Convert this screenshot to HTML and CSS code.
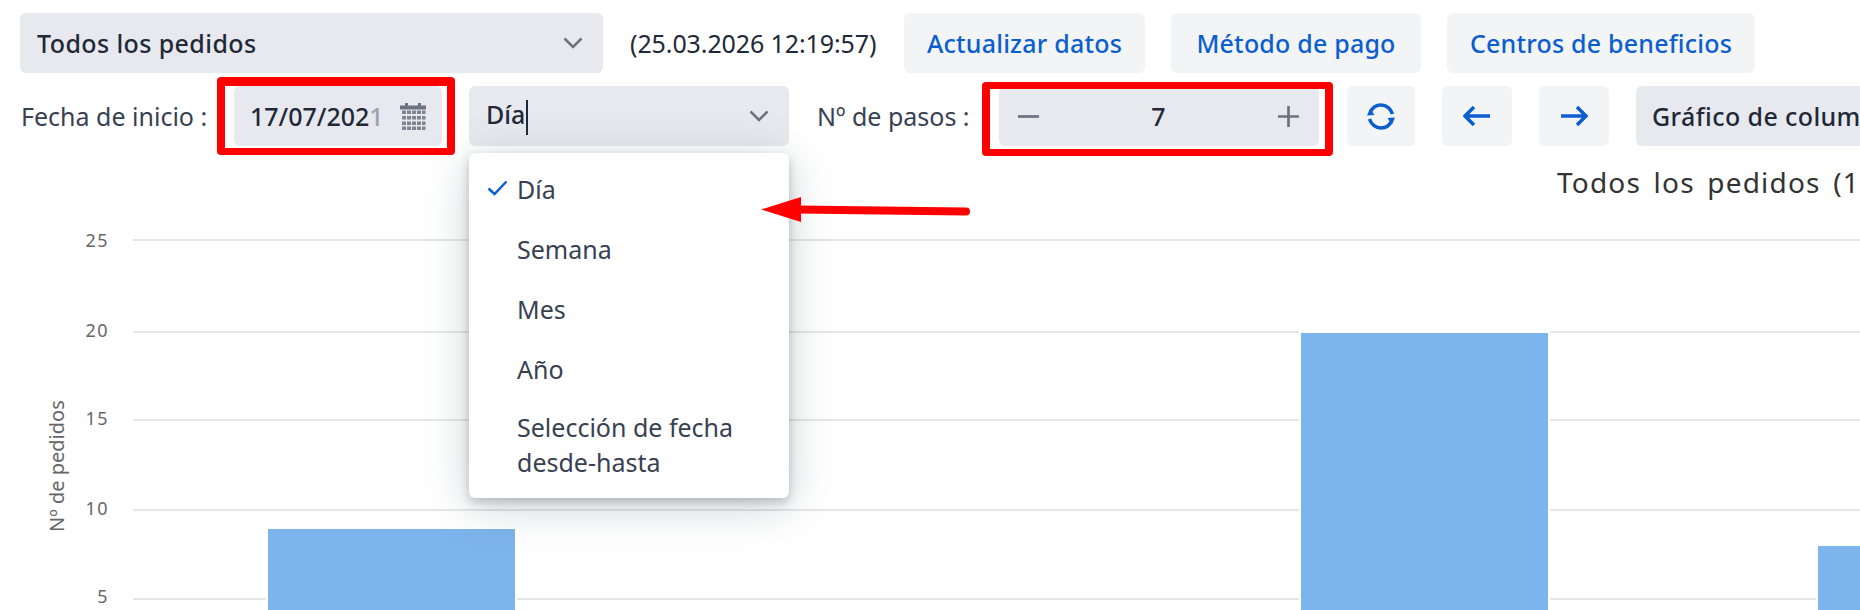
FILE: index.html
```html
<!DOCTYPE html>
<html lang="es">
<head>
    <meta charset="UTF-8">
    <title>Pedidos</title>
    <link rel="stylesheet" href="styles.css">
</head>
<body>
    <div class="toolbar">
        <div class="row row-top">
            <div class="select select-orders">
                <span>Todos los pedidos</span>
                <svg class="chevron" viewBox="0 0 20 12"><path d="M1.5 1.5 10 10l8.5-8.5"/></svg>
            </div>
            <span class="timestamp">(25.03.2026 12:19:57)</span>
            <button class="btn btn-update">Actualizar datos</button>
            <button class="btn btn-payment">Método de pago</button>
            <button class="btn btn-centers">Centros de beneficios</button>
        </div>

        <div class="row row-bottom">
            <label class="label label-date">Fecha de inicio :</label>
            <div class="date-input marked">
                <span class="date-text">17/07/202<span class="date-fade">1</span></span>
                <svg class="calendar" viewBox="0 0 26 27">
                    <path d="M0 2.5h5V0h3v2.5h10V0h3v2.5h5V6.5H0z"/>
                    <path d="M2 7.5h4V11H2zM7 7.5h4V11H7zM12 7.5h4V11h-4zM17 7.5h4V11h-4zM22 7.5h3.5V11H22zM2 13h4v3.5H2zM7 13h4v3.5H7zM12 13h4v3.5h-4zM17 13h4v3.5h-4zM22 13h3.5v3.5H22zM2 18.5h4V22H2zM7 18.5h4V22H7zM12 18.5h4V22h-4zM17 18.5h4V22h-4zM22 18.5h3.5V22H22zM2 23.5h4V27H2zM7 23.5h4V27H7zM12 23.5h4V27h-4zM17 23.5h4V27h-4zM22 23.5h3.5V27H22z" opacity=".85"/>
                </svg>
                <div class="red-box red-box-date"></div>
            </div>

            <div class="select select-period">
                <span>Día<span class="caret"></span></span>
                <svg class="chevron" viewBox="0 0 20 12"><path d="M1.5 1.5 10 10l8.5-8.5"/></svg>
                <ul class="menu">
                    <li class="menu-item">
                        <svg class="check" viewBox="0 0 21 16"><path d="M1.5 8.5 7.5 14l12-12.5"/></svg>
                        Día
                    </li>
                    <li class="menu-item">Semana</li>
                    <li class="menu-item">Mes</li>
                    <li class="menu-item">Año</li>
                    <li class="menu-item menu-item-long">Selección de fecha desde-hasta</li>
                </ul>
            </div>

            <label class="label label-steps">Nº de pasos :</label>
            <div class="stepper marked">
                <svg class="step-icon" viewBox="0 0 24 24"><path d="M1 12h22"/></svg>
                <span class="step-value">7</span>
                <svg class="step-icon" viewBox="0 0 24 24"><path d="M1 12h22M12 1v22"/></svg>
                <div class="red-box red-box-steps"></div>
            </div>

            <button class="btn btn-icon btn-refresh">
                <svg viewBox="0 0 28 27" class="blue-icon">
                    <path d="M3.5 9C5.5 4.5 9.5 2 14 2c5.5 0 10 4 11.5 9"/>
                    <path d="M24.5 18c-2 4.5-6 7-10.5 7-5.5 0-10-4-11.5-9"/>
                    <path class="fill" d="M0 12.5 7.5 12 3 5.5zM28 14.5 20.5 15l4.5 6.5z"/>
                </svg>
            </button>
            <button class="btn btn-icon btn-arrow">
                <svg viewBox="0 0 28 22" class="blue-icon"><path d="M27 11H2M11 2l-9 9 9 9"/></svg>
            </button>
            <button class="btn btn-icon btn-arrow">
                <svg viewBox="0 0 28 22" class="blue-icon"><path d="M1 11h25M17 2l9 9-9 9"/></svg>
            </button>
            <div class="select select-chart">
                <span>Gráfico de colum</span>
            </div>
        </div>
    </div>

    <!-- Chart -->
    <svg class="chart" viewBox="0 146 1860 464">
        <text class="chart-title" x="1557" y="193">Todos los pedidos (1</text>

        <g class="grid">
            <path d="M133 240H1860M133 332H1860M133 420H1860M133 510H1860M133 599H1860"/>
        </g>

        <g class="axis-labels">
            <text x="109" y="247">25</text>
            <text x="109" y="337">20</text>
            <text x="109" y="425">15</text>
            <text x="109" y="515">10</text>
            <text x="109" y="603">5</text>
        </g>
        <text class="axis-title" transform="translate(64 532) rotate(-90)">Nº de pedidos</text>

        <g class="bars">
            <rect x="267" y="528" width="249" height="90"/>
            <rect x="1300" y="332" width="249" height="286"/>
            <rect x="1817" y="545" width="60" height="70"/>
        </g>
    </svg>

    <!-- Red arrow drawn over the screenshot -->
    <svg class="annotation-arrow" viewBox="0 0 210 26">
        <path class="arrow-head" d="M0 12.5 40 0v25z"/>
        <path class="arrow-tail" d="M36 12.5 205 14.5"/>
    </svg>
</body>
</html>
```

FILE: styles.css
```css
* {
    margin: 0;
    padding: 0;
    box-sizing: border-box;
}
html, body {
    width: 1860px;
    height: 610px;
    overflow: hidden;
}
body {
    position: relative;
    font-family: "Noto Sans", sans-serif;
    font-size: 25px;
    color: #374151;
    background-color: #fff;
}
.toolbar {
    padding: 13px 0 0 20px;
}
.row {
    display: flex;
    align-items: center;
    height: 60px;
    white-space: nowrap;
}
.row-bottom {
    margin-top: 13px;
}
.select {
    position: relative;
    display: flex;
    align-items: center;
    justify-content: space-between;
    flex-shrink: 0;
    height: 60px;
    background-color: #e7e9ee;
    border-radius: 6px;
    color: #1f2937;
    font-weight: 500;
}
.select-orders {
    width: 583px;
    padding: 0 20px 0 17px;
    letter-spacing: 0.4px;
}
.select-period {
    width: 320px;
    margin-left: 27px;
    padding: 0 20px 0 17px;
}
.select-chart {
    width: 300px;
    margin-left: 27px;
    padding-left: 16px;
    letter-spacing: 0.4px;
}
.chevron {
    width: 20px;
    height: 12px;
    fill: none;
    stroke: #6b7280;
    stroke-width: 2.5;
}
.caret {
    display: inline-block;
    width: 2px;
    height: 35px;
    margin-left: 1px;
    vertical-align: middle;
    background-color: #1f2937;
}
.timestamp {
    width: 247px;
    margin-left: 27px;
    color: #1f2937;
    letter-spacing: -0.1px;
}
.btn {
    height: 60px;
    border: none;
    border-radius: 6px;
    background-color: #f3f4f6;
    color: #0b5ecf;
    font-family: inherit;
    font-size: 25px;
    font-weight: 500;
    letter-spacing: 0.2px;
    flex-shrink: 0;
}
.btn-update {
    width: 241px;
    margin-left: 27px;
}
.btn-payment {
    width: 250px;
    margin-left: 26px;
}
.btn-centers {
    width: 308px;
    margin-left: 26px;
}
.btn-icon {
    display: flex;
    align-items: center;
    justify-content: center;
}
.btn-refresh {
    width: 68px;
    margin-left: 28px;
}
.btn-refresh svg {
    width: 28px;
    height: 27px;
}
.btn-arrow {
    width: 70px;
    margin-left: 27px;
}
.btn-arrow svg {
    width: 28px;
    height: 22px;
}
.blue-icon {
    fill: none;
    stroke: #0b5ecf;
    stroke-width: 3.5;
}
.blue-icon .fill {
    fill: #0b5ecf;
    stroke: none;
}
.label {
    flex-shrink: 0;
    color: #374151;
}
.label-date {
    width: 186px;
    margin-left: 1px;
}
.label-steps {
    width: 155px;
    margin-left: 28px;
}
.marked {
    position: relative;
    flex-shrink: 0;
    height: 60px;
    background-color: #e7e9ee;
    border-radius: 6px;
    color: #1f2937;
    font-weight: 500;
}
.date-input {
    display: flex;
    align-items: center;
    justify-content: space-between;
    width: 208px;
    margin-left: 27px;
    padding: 0 16px;
}
.date-fade {
    color: #9ca3af;
}
.calendar {
    width: 26px;
    height: 27px;
    fill: #6b7280;
}
.stepper {
    display: flex;
    align-items: center;
    justify-content: space-between;
    width: 320px;
    margin-left: 27px;
    padding: 0 19px 0 18px;
}
.step-icon {
    width: 23px;
    height: 23px;
    fill: none;
    stroke: #6b7280;
    stroke-width: 2.8;
}
.red-box {
    position: absolute;
    border-style: solid;
    border-color: #f00;
    border-radius: 4px;
}
.red-box-date {
    top: -9px;
    left: -17px;
    width: 238px;
    height: 78px;
    border-width: 9px 8px 7px;
}
.red-box-steps {
    top: -4px;
    left: -17px;
    width: 351px;
    height: 74px;
    border-width: 7px 8px;
}
.menu {
    position: absolute;
    top: 67px;
    left: 0;
    width: 320px;
    height: 345px;
    padding-top: 6px;
    background-color: #fff;
    border-radius: 6px;
    list-style: none;
    color: #374151;
    font-weight: 400;
    white-space: normal;
    box-shadow: 0 4px 10px rgba(75, 85, 99, 0.3), 0 8px 44px rgba(75, 85, 99, 0.28);
    z-index: 2;
}
.menu-item {
    position: relative;
    display: flex;
    align-items: center;
    height: 60px;
    padding: 0 30px 0 48px;
}
.menu-item-long {
    height: 92px;
    line-height: 35px;
}
.check {
    position: absolute;
    left: 18px;
    top: 21px;
    width: 21px;
    height: 16px;
    fill: none;
    stroke: #0b5ecf;
    stroke-width: 2.5;
}
.chart {
    display: block;
    width: 1860px;
    height: 464px;
    font-family: "Noto Sans", sans-serif;
}
.chart-title {
    font-size: 28px;
    letter-spacing: 1.2px;
    word-spacing: 4px;
    fill: #333;
}
.grid path {
    fill: none;
    stroke: #e6e6e6;
    stroke-width: 2;
}
.axis-labels text {
    font-size: 18px;
    letter-spacing: 1.5px;
    text-anchor: end;
    fill: #666;
}
.axis-title {
    font-size: 20px;
    fill: #666;
}
.bars rect {
    fill: #7cb5ec;
    stroke: #fff;
    stroke-width: 2;
}
.annotation-arrow {
    position: absolute;
    left: 761px;
    top: 197px;
    width: 210px;
    height: 26px;
    z-index: 3;
}
.arrow-head {
    fill: #f00;
}
.arrow-tail {
    fill: none;
    stroke: #f00;
    stroke-width: 8;
    stroke-linecap: round;
}
```
